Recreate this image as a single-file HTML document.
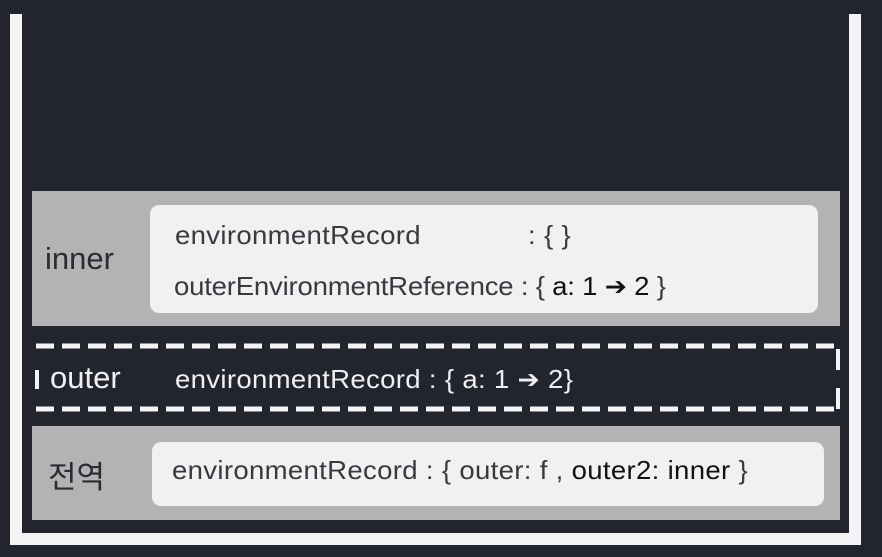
<!DOCTYPE html>
<html><head><meta charset="utf-8"><style>
body{margin:0;width:882px;height:557px;background:#23252e;position:relative;overflow:hidden;font-family:"Liberation Sans","Noto Sans CJK KR",sans-serif;}
.a{position:absolute}
.frame{background:#f4f4f6}
.gray{background:#b3b3b6}
.white{background:#f1f1f3;border-radius:9px}
.t{position:absolute;font-size:26px;color:#3a3a3e;white-space:nowrap;letter-spacing:0.3px;line-height:30px;transform:scaleX(1.06);transform-origin:left}
.b{color:#111}
.ar{font-family:"DejaVu Sans",sans-serif;font-size:25px;line-height:20px}
.lab{position:absolute;font-size:31px;color:#2c2c30}
</style></head><body>
<div class="a frame" style="left:10px;top:14px;width:12px;height:531px"></div>
<div class="a frame" style="left:849px;top:14px;width:12px;height:531px"></div>
<div class="a frame" style="left:10px;top:533px;width:851px;height:12px"></div>

<div class="a gray" style="left:32px;top:191px;width:808px;height:135px"></div>
<div class="a white" style="left:150px;top:205px;width:668px;height:108px"></div>
<div class="lab" style="left:45px;top:241px">inner</div>
<div class="t" style="left:175px;top:220px">environmentRecord</div>
<div class="t" style="left:528px;top:220px">: { }</div>
<div class="t" style="left:174px;top:271px;letter-spacing:-0.2px">outerEnvironmentReference : { <span class="b">a: 1 <span class="ar">➔</span> 2</span> }</div>

<svg class="a" style="left:0;top:0" width="882" height="557">
<line x1="36" y1="346" x2="838" y2="346" stroke="#f4f4f6" stroke-width="5" stroke-dasharray="18 8"/>
<line x1="36" y1="409" x2="838" y2="409" stroke="#f4f4f6" stroke-width="5" stroke-dasharray="18 8"/>
<line x1="37" y1="370" x2="37" y2="389" stroke="#f4f4f6" stroke-width="4"/>
<line x1="838" y1="349" x2="838" y2="370" stroke="#f4f4f6" stroke-width="4"/>
<line x1="838" y1="388" x2="838" y2="409" stroke="#f4f4f6" stroke-width="4"/>
</svg>
<div class="lab" style="left:50px;top:360px;color:#f0f0f2">outer</div>
<div class="t" style="left:175px;top:364px;color:#f0f0f2">environmentRecord : { a: 1 <span class="ar">➔</span> 2}</div>

<div class="a gray" style="left:32px;top:426px;width:808px;height:94px"></div>
<div class="a white" style="left:152px;top:442px;width:672px;height:64px"></div>
<div class="lab" style="left:48px;top:452px">전역</div>
<div class="t" style="left:172px;top:455px">environmentRecord : { outer: f , <span class="b">outer2: inner</span> }</div>
</body></html>
